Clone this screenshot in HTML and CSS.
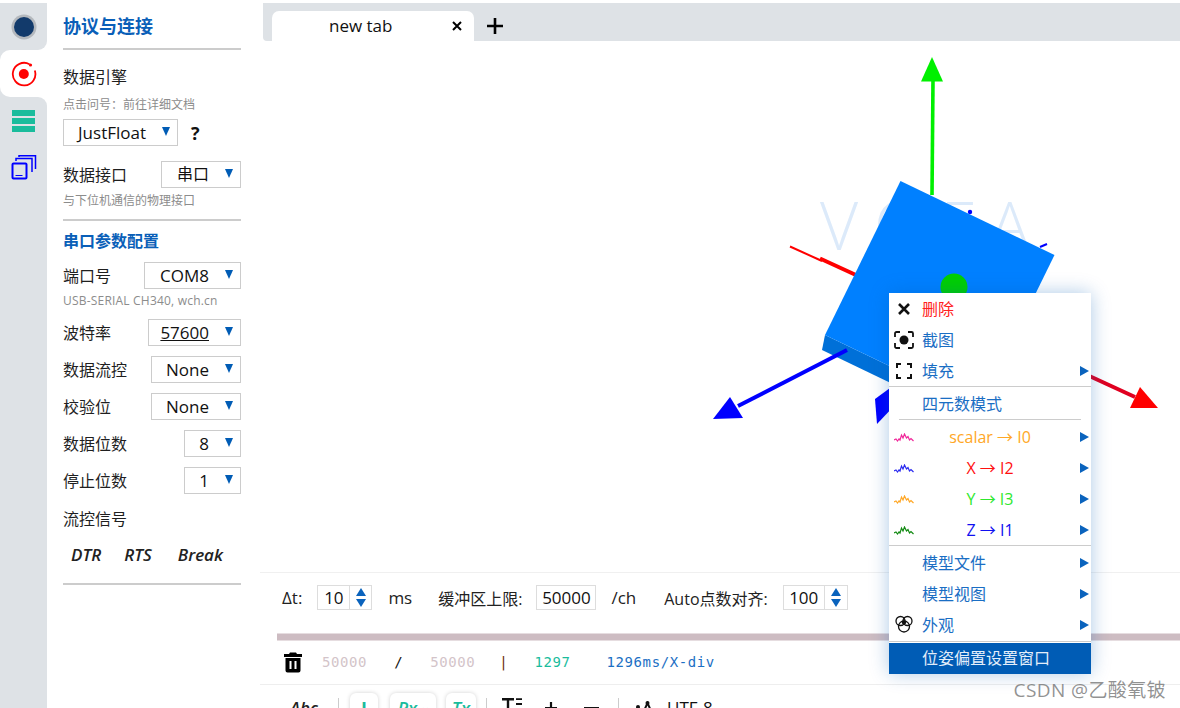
FILE: index.html
```html
<!DOCTYPE html>
<html lang="zh">
<head>
<meta charset="utf-8">
<title>VOFA+</title>
<link rel="stylesheet" href="styles.css">
</head>
<body>
<div class="app">
  <nav class="rail">
    <div class="rail-item rail-first">
      <svg width="26" height="26" viewBox="0 0 26 26"><circle cx="13" cy="13" r="12.5" fill="#b4b8bd"/><circle cx="13" cy="13" r="10" fill="#123a6b"/></svg>
    </div>
    <div class="rail-active"><div class="rail-active-in">
      <svg width="26" height="26" viewBox="0 0 26 26"><path d="M18.5 3.2A11.3 11.3 0 1 0 23.8 9.5" fill="none" stroke="#f00" stroke-width="1.8"/><circle cx="19.5" cy="4" r="1.6" fill="#f00"/><circle cx="12.8" cy="13" r="5" fill="#f00"/></svg>
    </div></div>
    <div class="rail-item rail-after">
      <div class="bars"><i></i><i></i><i></i></div>
    </div>
    <div class="rail-item rail-rest">
      <svg width="26" height="26" viewBox="0 0 26 26"><rect x="1.5" y="8.5" width="14" height="15" rx="1" fill="none" stroke="#00f" stroke-width="2"/><path d="M4.500 20.500h7" fill="none" stroke="#00f" stroke-width="1"/><path d="M5 6V3.500H21V17" fill="none" stroke="#00f" stroke-width="1.500"/><path d="M8 2V0.800H24.500V14" fill="none" stroke="#00f" stroke-width="1.500"/></svg>
    </div>
  </nav>

  <aside class="side">
    <h1 class="side-title">协议与连接</h1>
    <div class="rule"></div>
    <div class="label label-engine">数据引擎</div>
    <div class="hint">点击问号：前往详细文档</div>
    <div class="row row-engine">
      <div class="sel sel-engine">JustFloat</div>
      <span class="qmark">?</span>
    </div>
    <div class="row row-port">
      <span class="label">数据接口</span>
      <div class="sel sel-w80">串口</div>
    </div>
    <div class="hint hint-port">与下位机通信的物理接口</div>
    <div class="rule rule-2"></div>
    <h2 class="side-sub">串口参数配置</h2>
    <div class="row row-com">
      <span class="label">端口号</span>
      <div class="sel sel-w97">COM8</div>
    </div>
    <div class="hint hint-com">USB-SERIAL CH340, wch.cn</div>
    <div class="row row-baud">
      <span class="label">波特率</span>
      <div class="sel sel-w93 sel-u">57600</div>
    </div>
    <div class="row row-next">
      <span class="label">数据流控</span>
      <div class="sel sel-w90">None</div>
    </div>
    <div class="row row-next">
      <span class="label">校验位</span>
      <div class="sel sel-w90">None</div>
    </div>
    <div class="row row-next">
      <span class="label">数据位数</span>
      <div class="sel sel-w57">8</div>
    </div>
    <div class="row row-next">
      <span class="label">停止位数</span>
      <div class="sel sel-w57">1</div>
    </div>
    <div class="label label-flow">流控信号</div>
    <div class="flow"><span class="f1">DTR</span><span class="f2">RTS</span><span class="f3">Break</span></div>
    <div class="rule rule-3"></div>
  </aside>

  <main class="main">
    <div class="tabbar">
      <div class="tab"><span class="tab-name">new tab</span>
        <svg class="tab-x" width="10" height="10" viewBox="0 0 10 10"><path d="M1 1l8 8M9 1l-8 8" stroke="#000" stroke-width="2"/></svg>
      </div>
      <svg class="tab-plus" width="16" height="16" viewBox="0 0 16 16"><path d="M8 0v16M0 8h16" stroke="#000" stroke-width="2.600"/></svg>
    </div>

    <div class="canvas">
      <svg class="scene" width="920" height="532" viewBox="260 41 920 532">
        <text class="brand" x="820" y="250">VOFA</text>
        <path d="M932 195L933 80" stroke="#00f000" stroke-width="3.6"/>
        <path d="M932 57L921 81.500L943 81.500Z" fill="#00f000"/>
        <path d="M790 246.500L822 261" stroke="#f00" stroke-width="2"/>
        <path d="M820 258.500L857 275.500" stroke="#f00" stroke-width="4"/>
        <circle cx="970" cy="212" r="2.200" fill="#00f"/>
        <path d="M1040 247L1047 244" stroke="#00f" stroke-width="2"/>
        <path d="M1085 374L1135 397" stroke="#e00020" stroke-width="4"/>
        <path d="M1158 408L1140 387L1130 408Z" fill="#f00"/>
        <path d="M825 335L822 350L976 424L979 409Z" fill="#0070d8"/>
        <path d="M900.500 181L1054.500 255L979 409L825 335Z" fill="#0080ff"/>
        <circle cx="954" cy="287" r="13.500" fill="#00d000"/>
        <path d="M847 350L738 406" stroke="#00f" stroke-width="4"/>
        <path d="M713 419L730 397L743 418Z" fill="#00f"/>
        <path d="M875 399L877 424L895 405L890 388Z" fill="#00f"/>
      </svg>
    </div>

    <div class="controls">
      <span class="c-dt">Δt:</span>
      <div class="num num-dt"><span class="num-v">10</span><span class="spin"><i class="up"></i><i class="down"></i></span></div>
      <span class="c-ms">ms</span>
      <span class="c-buf">缓冲区上限:</span>
      <div class="num num-buf"><span class="num-v">50000</span></div>
      <span class="c-ch">/ch</span>
      <span class="c-auto">Auto点数对齐:</span>
      <div class="num num-auto"><span class="num-v">100</span><span class="spin"><i class="up"></i><i class="down"></i></span></div>
    </div>

    <div class="splitter"></div>

    <div class="status">
      <svg class="trash" width="20" height="22" viewBox="0 0 20 22"><path d="M1 3H6L7 1.500H13L14 3H19V6H1ZM2.500 7H17.500V19.500A2 2 0 0 1 15.500 21.500H4.500A2 2 0 0 1 2.500 19.500Z" fill="#000"/><path d="M7.500 10V18M12.500 10V18" stroke="#fff" stroke-width="2"/></svg>
      <span class="s-grey s-a">50000</span>
      <span class="s-dark s-b">/</span>
      <span class="s-grey s-c">50000</span>
      <span class="s-bar s-d">|</span>
      <span class="s-teal s-e">1297</span>
      <span class="s-blue s-f">1296ms/X-div</span>
    </div>

    <div class="tools">
      <span class="t-abc">Abc</span>
      <i class="t-sep t-sep1"></i>
      <span class="t-btn t-i">I</span>
      <span class="t-btn t-px">Px <small>×</small></span>
      <span class="t-btn t-tx">Tx</span>
      <i class="t-sep t-sep2"></i>
      <svg class="t-t" width="20" height="16" viewBox="0 0 20 16"><path d="M0 1.200H12M6 1.200V16" stroke="#111" stroke-width="2.400" fill="none"/><path d="M14 1.200H20M14 6H20M14 11H20" stroke="#111" stroke-width="1.800" fill="none"/></svg>
      <svg class="t-plus" width="12" height="12" viewBox="0 0 12 12"><path d="M6 0v12M0 6h12" stroke="#111" stroke-width="2.200"/></svg>
      <i class="t-minus"></i>
      <i class="t-sep t-sep3"></i>
      <svg class="t-tri" width="18" height="12" viewBox="0 0 18 12"><circle cx="2" cy="6" r="2" fill="#111"/><path d="M7 12L11.500 2L16 12" fill="none" stroke="#111" stroke-width="2"/><circle cx="11.500" cy="2" r="2" fill="#111"/></svg>
      <span class="t-utf">UTF-8</span>
    </div>
  </main>
</div>

<div class="menu">
  <div class="mi mi-up"><span class="mi-ico"><svg width="14" height="14" viewBox="0 0 14 14"><path d="M2 2l10 10M12 2L2 12" stroke="#111" stroke-width="2.600"/></svg></span><span class="mi-t t-red">删除</span></div>
  <div class="mi mi-up"><span class="mi-ico"><svg width="20" height="18" viewBox="0 0 20 18"><path d="M1 6V2.500A1.500 1.500 0 0 1 2.500 1H6M14 1H17.500A1.500 1.500 0 0 1 19 2.500V6M19 12V15.500A1.500 1.500 0 0 1 17.500 17H14M6 17H2.500A1.500 1.500 0 0 1 1 15.500V12" fill="none" stroke="#111" stroke-width="1.800"/><circle cx="10" cy="9" r="4.500" fill="#111"/></svg></span><span class="mi-t">截图</span></div>
  <div class="mi mi-up"><span class="mi-ico"><svg width="16" height="16" viewBox="0 0 16 16"><path d="M1 5V1H5M11 1H15V5M15 11V15H11M5 15H1V11" fill="none" stroke="#111" stroke-width="2"/></svg></span><span class="mi-t">填充</span><i class="mi-arr"></i></div>
  <div class="msep"></div>
  <div class="mi mi-head mi-up"><span class="mi-ico"></span><span class="mi-t">四元数模式</span></div>
  <div class="msep msep-in"></div>
  <div class="mi mi-first mi-ch"><span class="mi-ico"><svg width="20" height="10" viewBox="0 0 20 10"><path class="w w1" d="M0 7L2 6L3.500 8L5 6L6 7L7.500 2L9 5L10.500 1L12.500 5L14 3.500L15.500 7L17 5.500L19.500 8"/></svg></span><span class="mi-c c-scalar">scalar → I0</span><i class="mi-arr"></i></div>
  <div class="mi mi-ch"><span class="mi-ico"><svg width="20" height="10" viewBox="0 0 20 10"><path class="w w2" d="M0 7L2 6L3.500 8L5 6L6 7L7.500 2L9 5L10.500 1L12.500 5L14 3.500L15.500 7L17 5.500L19.500 8"/></svg></span><span class="mi-c c-x">X → I2</span><i class="mi-arr"></i></div>
  <div class="mi mi-ch"><span class="mi-ico"><svg width="20" height="10" viewBox="0 0 20 10"><path class="w w3" d="M0 7L2 6L3.500 8L5 6L6 7L7.500 2L9 5L10.500 1L12.500 5L14 3.500L15.500 7L17 5.500L19.500 8"/></svg></span><span class="mi-c c-y">Y → I3</span><i class="mi-arr"></i></div>
  <div class="mi mi-ch"><span class="mi-ico"><svg width="20" height="10" viewBox="0 0 20 10"><path class="w w4" d="M0 7L2 6L3.500 8L5 6L6 7L7.500 2L9 5L10.500 1L12.500 5L14 3.500L15.500 7L17 5.500L19.500 8"/></svg></span><span class="mi-c c-z">Z → I1</span><i class="mi-arr"></i></div>
  <div class="msep msep-b"></div>
  <div class="mi"><span class="mi-ico"></span><span class="mi-t">模型文件</span><i class="mi-arr"></i></div>
  <div class="mi"><span class="mi-ico"></span><span class="mi-t">模型视图</span><i class="mi-arr"></i></div>
  <div class="mi"><span class="mi-ico mi-ico-up"><svg width="18" height="18" viewBox="0 0 18 18" fill="none" stroke="#111" stroke-width="1.300"><circle cx="5.500" cy="6" r="4.500"/><circle cx="12.500" cy="6" r="4.500"/><circle cx="9" cy="11.500" r="5.500"/><circle cx="9" cy="7.500" r="1.500" fill="#111"/></svg></span><span class="mi-t">外观</span><i class="mi-arr"></i></div>
  <div class="msep msep-c"></div>
  <div class="mi mi-hi"><span class="mi-ico"></span><span class="mi-t">位姿偏置设置窗口</span></div>
</div>

<div class="mark">CSDN @乙酸氧铍</div>
</body>
</html>
```
FILE: styles.css
```css
* { box-sizing: border-box; }
html, body { margin: 0; padding: 0; height: 708px; overflow: hidden; background: #fff; }
body { font-family: "Open Sans", "Noto Sans CJK SC", sans-serif; font-size: 16px; color: #1a1a1a; position: relative; }
.app { display: flex; height: 708px; padding-top: 3px; }

/* rail */
.rail { width: 47px; flex: none; display: flex; flex-direction: column; height: 705px; }
.rail-item { background: #dee2e6; display: flex; justify-content: center; align-items: center; }
.rail-first { height: 47px; border-bottom-right-radius: 9px; }
.rail-active { height: 47px; background: #dee2e6; }
.rail-active-in { height: 47px; background: #fff; border-radius: 10px 0 0 10px; display: flex; justify-content: center; align-items: center; padding-left: 1px; }
.rail-after { height: 47px; border-top-right-radius: 9px; }
.rail-rest { flex: 1; align-items: flex-start; padding-top: 11px; }
.bars { width: 23px; display: flex; flex-direction: column; gap: 2px; }
.bars i { display: block; height: 6px; background: #1abc9c; }

/* sidebar */
.side { width: 213px; flex: none; padding: 0 19px 0 16px; margin-top: -3px; }
.side-title { margin: 0; padding-top: 13px; font-size: 18px; line-height: 26px; font-weight: 700; color: #0a5fb8; }
.rule { height: 2px; background: #ccc; margin-top: 9px; }
.rule-2 { margin-top: 10px; }
.rule-3 { margin-top: 16px; }
.label { font-size: 16px; line-height: 22px; color: #1f1f1f; white-space: nowrap; }
.label-engine { margin-top: 16px; }
.hint { font-size: 12px; line-height: 16px; color: #8c8c8c; white-space: nowrap; }
.label-engine + .hint { margin-top: 9px; }
.row { display: flex; align-items: center; justify-content: space-between; height: 27px; }
.row-engine { margin-top: 6px; justify-content: flex-start; }
.qmark { margin-left: 13px; font-weight: 700; font-size: 18px; color: #111; }
.row-port { margin-top: 15px; }
.hint-port { margin-top: 5px; }
.side-sub { margin: 9px 0 0; font-size: 16px; line-height: 22px; font-weight: 700; color: #0a5fb8; }
.row-com { margin-top: 10px; }
.hint-com { margin-top: 4px; letter-spacing: 0.2px; }
.row-baud { margin-top: 10px; }
.row-next { margin-top: 10px; }
.sel { height: 27px; border: 1px solid #ccc; padding-right: 31px; line-height: 25px; text-align: right; font-size: 17px; color: #111; position: relative; flex: none; white-space: nowrap; }
.sel::after { content: ""; position: absolute; right: 7px; top: 7px; border-left: 4.5px solid transparent; border-right: 4.5px solid transparent; border-top: 9px solid #005cb5; }
.sel-engine { width: 115px; }
.sel-w80 { width: 80px; font-size: 16px; }
.sel-w97 { width: 97px; }
.sel-w93 { width: 93px; text-decoration: underline; }
.sel-w90 { width: 90px; }
.sel-w57 { width: 57px; }
.label-flow { margin-top: 14px; }
.flow { display: flex; margin-top: 13px; height: 24px; font-style: italic; font-weight: 600; font-size: 17px; line-height: 24px; color: #222; }
.f1 { margin-left: 8px; }
.f2 { margin-left: 23px; }
.f3 { margin-left: 26px; }

/* main */
.main { flex: 1; min-width: 0; display: flex; flex-direction: column; }
.tabbar { height: 38px; flex: none; background: #dee2e6; margin-left: 3px; display: flex; align-items: flex-end; padding-left: 9px; position: relative; border-bottom-left-radius: 4px; }
.tab { width: 202px; height: 30px; background: #fff; border-radius: 7px 7px 0 0; position: relative; padding-left: 57px; line-height: 30px; font-size: 17px; color: #111; display: flex; }
.tab-name { white-space: nowrap; }
.tab-x { position: absolute; right: 12px; top: 10px; }
.tab-plus { margin: 0 0 7px 13px; }
.canvas { height: 532px; flex: none; position: relative; border-bottom: 1px solid #f0f0f0; }
.scene { display: block; }
.brand { font-size: 66px; font-family: "Open Sans", sans-serif; font-weight: 300; letter-spacing: 16px; fill: #dceafa; }

.controls { height: 60px; flex: none; display: flex; align-items: center; padding: 0 0 11px 22px; font-size: 16px; color: #222; white-space: nowrap; }
.num { height: 25px; border: 1px solid #ddd; display: flex; align-items: center; flex: none; }
.num-v { color: #111; text-align: center; font-size: 17px; }
.num-dt { width: 55px; margin-left: 15px; }
.num-dt .num-v { width: 31px; }
.num-buf { width: 60px; margin-left: 14px; }
.num-buf .num-v { width: 58px; }
.num-auto { width: 65px; margin-left: 15px; }
.num-auto .num-v { width: 40px; }
.spin { flex: 1; height: 23px; border-left: 1px solid #ddd; display: flex; flex-direction: column; align-items: center; justify-content: center; gap: 3px; }
.spin i { display: block; border-left: 5px solid transparent; border-right: 5px solid transparent; }
.spin .up { border-bottom: 8px solid #0a63bd; }
.spin .down { border-top: 8px solid #0a63bd; }
.c-dt { font-size: 17px; }
.c-ms { margin-left: 16px; font-size: 17px; }
.c-buf { margin-left: 26px; }
.c-ch { margin-left: 15px; font-size: 17px; }
.c-auto { margin-left: 28px; }

.splitter { height: 8px; flex: none; margin-left: 17px; background: #cdbcc2; border-top: 1px solid #e6dde0; border-bottom: 1px solid #e6dde0; }

.status { height: 44px; flex: none; display: flex; align-items: center; padding: 0 0 2px 23px; font-family: "DejaVu Sans Mono", monospace; font-size: 14px; letter-spacing: 0.6px; border-bottom: 1px solid #eee; white-space: nowrap; }
.trash { flex: none; }
.s-grey { color: #d3c4c9; }
.s-dark { color: #111; }
.s-bar { color: #6b2a08; }
.s-teal { color: #1abc9c; }
.s-blue { color: #1c6fc4; }
.s-a { margin-left: 19px; }
.s-b { margin-left: 27px; }
.s-c { margin-left: 27px; }
.s-d { margin-left: 24px; }
.s-e { margin-left: 26px; }
.s-f { margin-left: 36px; }

.tools { height: 40px; flex: none; display: flex; align-items: flex-start; padding: 8px 0 0 30px; font-size: 16px; white-space: nowrap; color: #222; }
.t-abc { font-style: italic; font-weight: 600; font-size: 17px; line-height: 30px; width: 28px; }
.t-sep { display: block; width: 1px; height: 20px; background: #ccc; margin-top: 5px; }
.t-sep1 { margin-left: 20px; }
.t-btn { display: block; height: 30px; background: #fff; border-radius: 6px; box-shadow: 0 0 4px rgba(0,0,0,.18); color: #1abc9c; font-weight: 600; font-size: 18px; text-align: center; line-height: 30px; font-style: italic; }
.t-btn small { color: #aaa; font-style: normal; font-weight: 400; font-size: 12px; }
.t-i { width: 28px; margin-left: 11px; font-style: normal; font-weight: 700; }
.t-px { width: 46px; margin-left: 12px; }
.t-tx { width: 30px; margin-left: 10px; }
.t-sep2 { margin-left: 10px; }
.t-t { flex: none; margin: 5px 0 0 15px; }
.t-plus { flex: none; margin: 9px 0 0 23px; }
.t-minus { display: block; flex: none; width: 15px; height: 2px; background: #111; margin: 14px 0 0 27px; }
.t-sep3 { margin-left: 19px; }
.t-tri { flex: none; margin: 8px 0 0 17px; }
.t-utf { margin-left: 13px; font-size: 17px; line-height: 30px; color: #111; }

/* context menu */
.menu { position: absolute; left: 889px; top: 293px; width: 202px; height: 380px; background: #fff; box-shadow: 0 0 18px rgba(0, 90, 180, .33); }
.mi { height: 31px; display: flex; align-items: center; position: relative; color: #1a6ec4; white-space: nowrap; line-height: 31px; }
.mi-up .mi-t { padding-top: 2px; }
.mi-up .mi-arr { top: 11px; }
.mi-ch { padding-top: 2px; }
.mi-ch .mi-arr { top: 11px; }
.mi-ico { width: 33px; flex: none; display: flex; justify-content: center; padding-right: 3px; }
.mi-ico-up { margin-top: -4px; }
.mi-t { font-size: 16px; }
.t-red { color: #ff2020; }
.mi-c { position: absolute; left: 33px; width: 136px; text-align: center; font-size: 16px; }
.c-scalar { color: #ffa726; }
.c-x { color: #ff1010; }
.c-y { color: #2ee82e; }
.c-z { color: #1010f0; }
.mi-arr { position: absolute; right: 2px; top: 10px; border-top: 5px solid transparent; border-bottom: 5px solid transparent; border-left: 9px solid #0a63bd; }
.msep { height: 1px; background: #ccc; }
.mi-head { height: 32px; line-height: 32px; }
.msep-in { margin: 0 10px; }
.mi-first { margin-top: 1px; }
.msep-b { margin-bottom: 2px; }
.msep-c { margin-bottom: 1px; }
.mi-hi { background: #005cb5; color: #e4eefa; height: 31px; }
.w { fill: none; stroke-width: 1.200; }
.w1 { stroke: #f0289a; }
.w2 { stroke: #2a2af0; }
.w3 { stroke: #ffa726; }
.w4 { stroke: #128a12; }

.mark { position: absolute; right: 14px; top: 679px; font-size: 19px; line-height: 22px; letter-spacing: 0.4px; color: rgba(110,110,110,.75); white-space: nowrap; }
```
